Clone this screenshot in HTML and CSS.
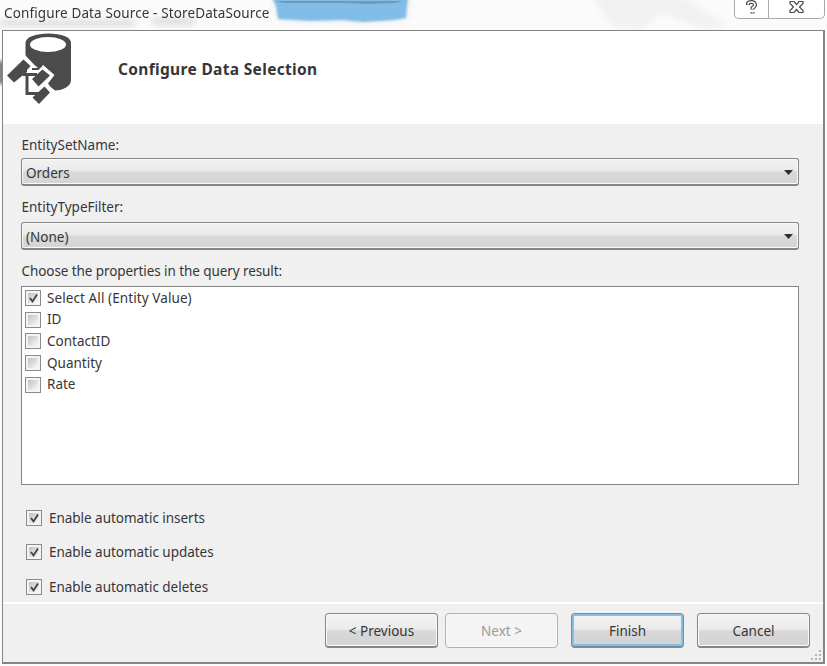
FILE: index.html
```html
<!DOCTYPE html>
<html lang="en">
<head>
<meta charset="utf-8">
<title>Configure Data Source - StoreDataSource</title>
<link rel="stylesheet" href="styles.css">
</head>
<body>
<div class="window">
  <header class="titlebar">
    <svg class="glass" width="827" height="30" viewBox="0 0 827 30" aria-hidden="true">
      <defs><filter id="soft" x="-20%" y="-50%" width="140%" height="200%"><feGaussianBlur stdDeviation="3"/></filter><filter id="edge"><feGaussianBlur stdDeviation=".8"/></filter></defs>
      <g filter="url(#soft)" fill="#dcdcdc"><path d="M0 20h135v6H0zM152 18h42v7h-42z"/><path d="M590-5h90l50 33h-30L660 12l-15 16h-30z" opacity=".3"/></g>
      <path d="M271-2h139l-1 7-2 14-18 2-30 2-20-2-30 0-30-1-3-14z" fill="#eaeaea" filter="url(#soft)"/>
      <path d="M272-2h136l-1 8-1 12-12 2-30 2-22-2-32 1-32-2-2-13z" fill="#80bde8" filter="url(#edge)"/>
      <path d="M276 1h127l-8 2-28 1-24-1-60 0z" fill="#7799af"/>
    </svg>
    <h1 class="title">Configure Data Source - StoreDataSource</h1>
    <div class="caption-buttons">
      <button class="caption help" aria-label="Help"><svg width="13" height="16" viewBox="0 0 13 16"><path d="M3 5V3.500Q3.500 2 6.500 2T10 4.500Q10 6.500 7.500 8V9.500M7.500 12v1.500" fill="none" stroke="#4b4b4d" stroke-width="4"/><path d="M3 4.500V3.500Q3.500 2 6.500 2T10 4.500Q10 6.500 7.500 8V9M7.500 12.200v1" fill="none" stroke="#fff" stroke-width="1.700"/></svg></button>
      <button class="caption close" aria-label="Close"><svg width="15" height="14" viewBox="0 0 15 14"><path d="M1 1.500h4l2.500 3 2.500-3h4v2L10.500 7l3.500 3.500v2h-4l-2.500-3-2.500 3H1v-2L4.500 7 1 3.500z" fill="#fff" stroke="#4b4b4d" stroke-width="1.200"/></svg></button>
    </div>
  </header>
  <main class="dialog">
    <section class="banner">
      <svg class="logo" width="68" height="76" viewBox="0 0 68 76" aria-hidden="true">
        <path d="M18.500 11C18.500 5 29 1.500 41.500 1.500S64 5 64 11V48C64 54 56 58.500 48 58.500L18.500 35z" fill="#4b4b4d"/>
        <ellipse cx="41" cy="12.500" rx="18" ry="7.500" fill="#fff"/>
        <path d="M18 23 27 32.500 31 36 36 33 47.500 43 41 51.500 47 60 33 76 24 66H17V48L9 56z" fill="#fff"/>
        <path d="M25 37h6l4-4" fill="none" stroke="#4b4b4d" stroke-width="2"/>
        <path d="M0 43.500 16.500 27.500 23.500 34 20 38 20 40 7 50.500zM25 47 35.500 37.500 43 43.500 31.500 54.500zM25.500 65.500 37.500 54.500 43 60.500 32 72z" fill="#4b4b4d"/>
        <path d="M16 42.500H30M20 42V61.500H32" fill="none" stroke="#4b4b4d" stroke-width="3"/>
      </svg>
      <h2 class="heading">Configure Data Selection</h2>
    </section>
    <form class="content">
      <label class="label set-label">EntitySetName:</label>
      <div class="combo" role="combobox"><span>Orders</span><i class="arrow"></i></div>
      <label class="label filter-label">EntityTypeFilter:</label>
      <div class="combo second" role="combobox"><span>(None)</span><i class="arrow"></i></div>
      <label class="label query-label">Choose the properties in the query result:</label>
      <div class="list">
        <div class="row"><i class="check on"><svg viewBox="0 0 11 11"><path d="M2 5 4.500 8.500 9 1.500"/></svg></i><span class="select-all">Select All (Entity Value)</span></div>
        <div class="row"><i class="check"></i><span>ID</span></div>
        <div class="row"><i class="check"></i><span>ContactID</span></div>
        <div class="row"><i class="check"></i><span>Quantity</span></div>
        <div class="row"><i class="check"></i><span>Rate</span></div>
      </div>
      <div class="options">
        <div class="option"><i class="check on"><svg viewBox="0 0 11 11"><path d="M2 5 4.500 8.500 9 1.500"/></svg></i><span>Enable automatic inserts</span></div>
        <div class="option"><i class="check on"><svg viewBox="0 0 11 11"><path d="M2 5 4.500 8.500 9 1.500"/></svg></i><span>Enable automatic updates</span></div>
        <div class="option"><i class="check on"><svg viewBox="0 0 11 11"><path d="M2 5 4.500 8.500 9 1.500"/></svg></i><span>Enable automatic deletes</span></div>
      </div>
    </form>
    <footer class="actions">
      <button class="btn previous">&lt; Previous</button>
      <button class="btn next" disabled>Next &gt;</button>
      <button class="btn finish">Finish</button>
      <button class="btn cancel">Cancel</button>
      <svg class="grip" width="11" height="11" viewBox="0 0 11 11"><path d="M8 0h2v2H8zM4 4h2v2H4zM8 4h2v2H8zM0 8h2v2H0zM4 8h2v2H4zM8 8h2v2H8z" fill="#b5b5b5"/></svg>
    </footer>
  </main>
</div>
</body>
</html>
```
FILE: styles.css
```css
* { box-sizing: border-box; }
body { margin: 0; overflow: hidden; background: #fbfbfb; color: #363638; font: 13.5px/20px "Noto Sans", "Open Sans", sans-serif; }
h1, h2 { margin: 0; }
button { font: inherit; color: inherit; margin: 0; padding: 0; }
.window { width: 827px; height: 666px; background: linear-gradient(#fbfbfb, #858585 20%, #858585 80%, #fbfbfb) 0 58px / 2px 29px no-repeat; }
.titlebar { position: relative; display: flex; justify-content: space-between; height: 30px; padding: 0 2px 0 4px; }
.glass { position: absolute; left: 0; top: 0; }
.title { position: relative; margin-top: 3px; font-size: 13.5px; font-weight: 400; line-height: 20px; white-space: nowrap; letter-spacing: .12px; }
.caption-buttons { position: relative; display: flex; width: 91px; height: 19px; border: 1px solid #a9a9a9; border-top: 0; border-radius: 0 0 5px 5px; background: #fff; }
.caption { display: flex; justify-content: center; border: 0; background: transparent; }
.help { width: 34px; border-right: 1px solid #aaa; }
.close { flex: 1; }
.dialog { width: 823px; height: 634px; margin-left: 2px; border: 1px solid #858585; border-right-width: 2px; border-bottom-width: 2px; background: #f0f0f0; }
.banner { display: flex; height: 93px; padding-left: 4px; background: #fff; }
.logo { margin-top: 1px; }
.heading { margin: 28px 0 0 43px; font-size: 15.5px; line-height: 20px; font-weight: 700; white-space: nowrap; letter-spacing: .33px; }
.content { height: 480px; padding: 11px 23px 0 18px; border-bottom: 2px solid #fff; }
.label { display: block; height: 20px; padding-left: .5px; white-space: nowrap; }
.combo { display: flex; align-items: center; justify-content: space-between; height: 28px; margin-top: 3px; padding: 2px 5px 0 4px; border: 1px solid #858585; border-bottom-width: 2px; border-radius: 3px; background: linear-gradient(#f2f2f2 0, #ebebeb 44%, #d8d8d8 54%, #d4d4d4); box-shadow: inset 0 0 0 1px #fafafa; }
.arrow { width: 9px; height: 5px; background: #303032; clip-path: polygon(0 0, 100% 0, 50% 100%); }
.filter-label { margin-top: 11px; }
.second { margin-top: 5px; }
.query-label { margin-top: 11px; letter-spacing: -.08px; }
.combo, .list { margin-right: 1px; }
.list { height: 199px; margin-top: 5px; padding: 0 0 0 3px; border: 1px solid #858585; background: #fff; }
.row { display: flex; align-items: center; height: 21.6px; gap: 6px; }
.select-all { letter-spacing: .09px; }
.check { display: block; flex: none; width: 16px; height: 16px; padding: 2px; border: 1px solid #8b8b8b; background: linear-gradient(135deg, #c0c0c0, #fafafa) content-box, #f4f4f4; }
.row .check { margin-top: 1px; }
.check svg { display: block; width: 11px; height: 11px; }
.check path { fill: none; stroke: #414145; stroke-width: 1.8; }
.options { padding: 23px 0 0 5px; }
.option { display: flex; align-items: center; gap: 7px; height: 20px; margin-bottom: 14.4px; letter-spacing: -.03px; }
.actions { position: relative; display: flex; height: 58px; padding: 9px 0 0 322px; }
.btn { width: 113px; height: 35px; border: 1px solid #858585; border-bottom-width: 2px; border-radius: 4px; background: linear-gradient(#f3f3f3 0, #ebebeb 47%, #d8d8d8 53%, #d3d3d3); box-shadow: inset 0 0 0 1px #fafafa; padding-top: 2px; }
.next { margin-left: 7px; color: #9a9a9a; border-color: #b0b0b0; border-width: 1px; background: #f4f4f4; padding-top: 0; }
.finish { margin-left: 13px; border-color: #778b99; box-shadow: inset 0 0 0 2px #84bde6; }
.cancel { margin-left: 13px; }
.grip { position: absolute; right: 1px; bottom: 1px; }
```
